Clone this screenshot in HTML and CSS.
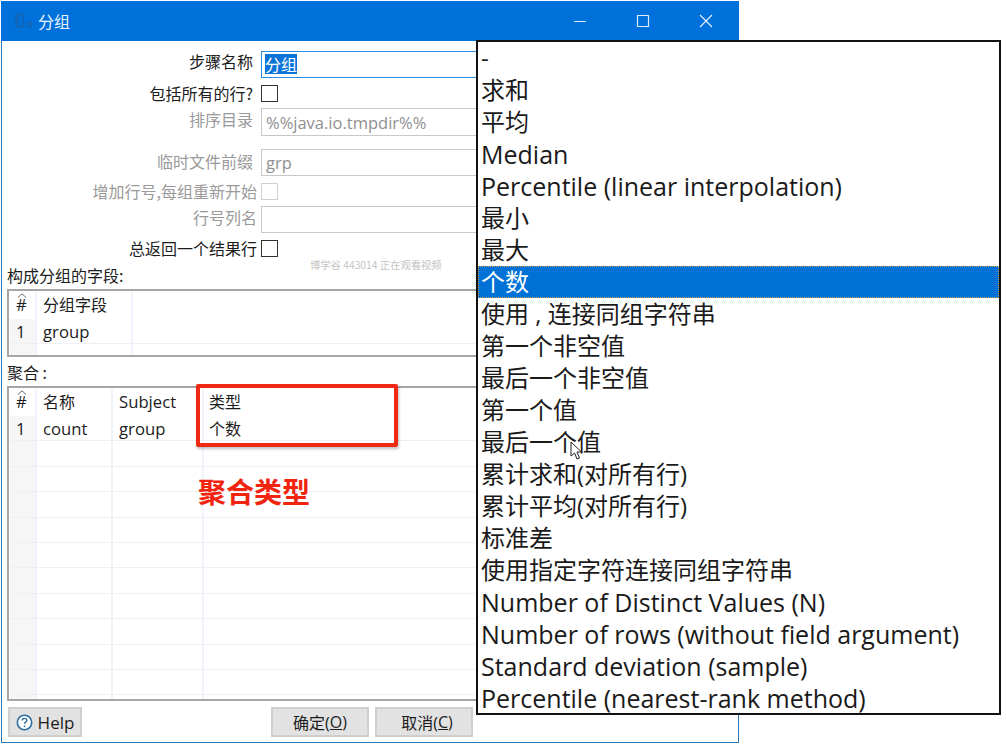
FILE: index.html
```html
<!DOCTYPE html>
<html lang="zh">
<head>
<meta charset="utf-8">
<title>分组</title>
<link rel="stylesheet" href="styles.css">
</head>
<body>
<div class="window">
  <header class="titlebar">
    <svg class="app-icon" width="18" height="16" viewBox="0 0 18 16"><path d="M1 1h7v13H1zM3 1v13M12 9h4v5h-4z" fill="none" stroke="#1a5f9e" stroke-width="1"/></svg>
    <span class="title">分组</span>
    <div class="controls">
      <svg class="ctl" width="14" height="14" viewBox="0 0 14 14"><path d="M1 7.5h12" stroke="#dcebfa" stroke-width="1" fill="none"/></svg>
      <svg class="ctl" width="14" height="14" viewBox="0 0 14 14"><path d="M1.5 1.5h11v11h-11z" stroke="#dcebfa" stroke-width="1.2" fill="none"/></svg>
      <svg class="ctl" width="14" height="14" viewBox="0 0 14 14"><path d="M1 1l12 12M13 1L1 13" stroke="#eaf3fc" stroke-width="1.1" fill="none"/></svg>
    </div>
  </header>
  <main class="body">
    <form class="form">
      <label class="lbl up4">步骤名称</label><div class="field focus"><span class="sel">分组</span></div>
      <label class="lbl">包括所有的行?</label><div class="check-row"><span class="check"></span></div>
      <label class="lbl up3 off">排序目录</label><div class="field tall off">%%java.io.tmpdir%%</div>
      <div class="spacer"></div>
      <label class="lbl up2 off">临时文件前缀</label><div class="field off">grp</div>
      <label class="lbl wide off">增加行号,每组重新开始</label><div class="check-row"><span class="check off"></span></div>
      <label class="lbl wide up3 off">行号列名</label><div class="field off"></div>
      <label class="lbl wide">总返回一个结果行</label><div class="check-row"><span class="check"></span></div>
    </form>
    <div class="section s1">构成分组的字段:</div>
    <div class="grid g1">
      <div class="row head"><div class="c num"><svg class="caret" width="10" height="5" viewBox="0 0 10 5"><path d="M1 4.5L5 .8l4 3.7" fill="none" stroke="#666"/></svg>#</div><div class="c w95 cjk">分组字段</div><div class="c"></div></div>
      <div class="row line"><div class="c num">1</div><div class="c w95">group</div><div class="c"></div></div>
      <div class="row short"><div class="c num"></div><div class="c w95"></div><div class="c"></div></div>
    </div>
    <div class="section s2">聚合 :</div>
    <div class="grid g2">
      <div class="row head"><div class="c num"><svg class="caret" width="10" height="5" viewBox="0 0 10 5"><path d="M1 4.5L5 .8l4 3.7" fill="none" stroke="#666"/></svg>#</div><div class="c w76 cjk">名称</div><div class="c w91">Subject</div><div class="c cjk type">类型</div></div>
      <div class="row line"><div class="c num">1</div><div class="c w76">count</div><div class="c w91">group</div><div class="c cjk type">个数</div></div>
      <div class="row line e"><div class="c num"></div><div class="c w76"></div><div class="c w91"></div><div class="c"></div></div>
      <div class="row line e"><div class="c num"></div><div class="c w76"></div><div class="c w91"></div><div class="c"></div></div>
      <div class="row line e"><div class="c num"></div><div class="c w76"></div><div class="c w91"></div><div class="c"></div></div>
      <div class="row line e"><div class="c num"></div><div class="c w76"></div><div class="c w91"></div><div class="c"></div></div>
      <div class="row line e"><div class="c num"></div><div class="c w76"></div><div class="c w91"></div><div class="c"></div></div>
      <div class="row line e"><div class="c num"></div><div class="c w76"></div><div class="c w91"></div><div class="c"></div></div>
      <div class="row line e"><div class="c num"></div><div class="c w76"></div><div class="c w91"></div><div class="c"></div></div>
      <div class="row line e"><div class="c num"></div><div class="c w76"></div><div class="c w91"></div><div class="c"></div></div>
      <div class="row line e"><div class="c num"></div><div class="c w76"></div><div class="c w91"></div><div class="c"></div></div>
      <div class="row line e"><div class="c num"></div><div class="c w76"></div><div class="c w91"></div><div class="c"></div></div>
      <div class="row tail"><div class="c num"></div><div class="c w76"></div><div class="c w91"></div><div class="c"></div></div>
    </div>
    <footer class="buttons">
      <button class="btn help" type="button"><svg width="17" height="17" viewBox="0 0 17 17"><circle cx="8.5" cy="8.5" r="7.2" fill="#fff" stroke="#2f6f9f" stroke-width="1.6"/><path d="M6.2 6.6c0-1.4 1-2.2 2.3-2.2s2.3.8 2.3 2c0 1.700-2.300 1.700-2.300 3.400" fill="none" stroke="#2f6f9f" stroke-width="1.400"/><circle cx="8.500" cy="12.300" r=".9" fill="#2f6f9f"/></svg>Help</button>
      <span class="grow"></span>
      <button class="btn act" type="button">确定(<u>O</u>)</button>
      <button class="btn act cancel" type="button">取消(<u>C</u>)</button>
    </footer>
  </main>
  <div class="watermark">博学谷 443014 正在观看视频</div>
  <div class="redbox"></div>
  <div class="redlabel">聚合类型</div>
</div>
<ul class="dropdown">
  <li>-</li>
  <li>求和</li>
  <li>平均</li>
  <li class="en">Median</li>
  <li class="en">Percentile (linear interpolation)</li>
  <li>最小</li>
  <li>最大</li>
  <li class="selected">个数</li>
  <li>使用 , 连接同组字符串</li>
  <li>第一个非空值</li>
  <li>最后一个非空值</li>
  <li>第一个值</li>
  <li>最后一个值</li>
  <li>累计求和(对所有行)</li>
  <li>累计平均(对所有行)</li>
  <li>标准差</li>
  <li>使用指定字符连接同组字符串</li>
  <li class="en">Number of Distinct Values (N)</li>
  <li class="en">Number of rows (without field argument)</li>
  <li class="en">Standard deviation (sample)</li>
  <li class="en">Percentile (nearest-rank method)</li>
</ul>
<svg class="cursor" width="13" height="19" viewBox="0 0 13 19"><path d="M1 1v14l3.500-3 2.500 6 2.500-1-2.500-6h4.500z" fill="#fff" stroke="#222" stroke-width="1"/></svg>
</body>
</html>
```
FILE: styles.css
```css
html, body {
  margin: 0;
  padding: 0;
  background: #fff;
  overflow: hidden;
}
body {
  width: 1006px;
  height: 744px;
  position: relative;
  font-family: "Open Sans", "Noto Sans CJK SC", sans-serif;
  color: #1c1c1c;
}
.window {
  position: absolute;
  left: 1px;
  top: 1px;
  width: 738px;
  height: 742px;
  box-sizing: border-box;
  border: 1px solid #2a78b8;
  border-top: 0;
  display: flex;
  flex-direction: column;
  background: #fff;
}
.titlebar {
  height: 40px;
  flex: none;
  margin: 0 -1px;
  background: #0071db;
  display: flex;
  align-items: center;
  color: #e8f2fc;
  font-size: 16px;
  font-family: "Noto Sans CJK SC", sans-serif;
  padding-left: 14px;
}
.app-icon { margin-right: 5px; }
.controls {
  margin-left: auto;
  display: flex;
  gap: 49px;
  padding-right: 26px;
}
.body {
  flex: 1;
  display: flex;
  flex-direction: column;
  padding: 0 0 5px 5px;
  min-height: 0;
}
.form {
  display: grid;
  grid-template-columns: 254px 1fr;
  margin-top: 10px;
  font-size: 16px;
  font-family: "Noto Sans CJK SC", sans-serif;
}
.lbl {
  padding-right: 8px;
  display: flex;
  align-items: center;
  justify-content: flex-end;
  white-space: nowrap;
  line-height: 18px;
  color: #1c1c1c;
}
.lbl.up2 { padding-bottom: 4px; }
.lbl.up3 { padding-bottom: 6px; }
.lbl.up4 { padding-bottom: 8px; }
.lbl.wide { padding-right: 4px; }
.lbl.off { color: #9a9a9a; }
.field {
  height: 27px;
  box-sizing: border-box;
  border: 1px solid #c8c8c8;
  padding: 0 4px;
  line-height: 26px;
  font-family: "Open Sans", "Noto Sans CJK SC", sans-serif;
  font-size: 16.5px;
  width: 300px;
}
.field.tall { height: 28px; line-height: 27px; }
.field.focus {
  border: 1px solid #2d8ce4;
  color: #fff;
  padding-left: 3px;
}
.field.off { color: #8f8f8f; }
.sel {
  background: #0a74d8;
  display: inline-block;
  line-height: 20px;
  font-size: 16px;
  font-family: "Noto Sans CJK SC", sans-serif;
}
.spacer { grid-column: 1 / -1; height: 13px; }
.check-row {
  height: 30px;
  display: flex;
  align-items: center;
}
.check {
  width: 17px;
  height: 17px;
  box-sizing: border-box;
  border: 1px solid #333;
  background: #fff;
}
.check.off { border-color: #d0d0d0; }
.section {
  font-size: 16px;
  line-height: 20px;
  font-family: "Noto Sans CJK SC", sans-serif;
}
.s1 { margin-top: 2px; }
.s2 { margin-top: 5px; }
.grid {
  box-sizing: border-box;
  width: 470px;
  border: 2px solid #a6a6a6;
  border-right: 0;
  padding: 1px 0 0 1px;
  margin-top: 4px;
  font-size: 16.7px;
  overflow: hidden;
}
.g1 { height: 68px; }
.g2 { height: 315px; }
.row {
  display: flex;
  height: 26px;
}
.row.head { height: 27px; }
.row.line { height: 25.400px; box-sizing: border-box; border-bottom: 1px solid #eef0f3; }
.row.short { height: 14px; }
.row.tail { height: 20px; }
.c {
  box-sizing: border-box;
  line-height: 25px;
  padding-left: 6px;
  white-space: nowrap;
  flex: none;
  border-right: 2px solid #f0f3f9;
}
.c:last-child { flex: 1; border-right: 0; }
.cjk { font-family: "Noto Sans CJK SC", sans-serif; font-size: 16px; }
.type { padding-left: 5px; }
.num {
  width: 27px;
  background: #f5f6f5;
  position: relative;
  padding-left: 6px;
}
.head .num { background: #fff; }
.caret { position: absolute; left: 7px; top: 1px; }
.w95 { width: 96px; }
.w76 { width: 76px; }
.w91 { width: 91px; }
.buttons {
  display: flex;
  margin-top: 6px;
  gap: 6px;
  height: 30px;
  padding-right: 265px;
  flex: none;
  padding-left: 1px;
}
.grow { flex: 1; }
.btn {
  box-sizing: border-box;
  height: 30px;
  background: #e2e2e2;
  border: 2px solid #cfcfcf;
  font-size: 17px;
  color: #1c1c1c;
  font-family: "Open Sans", "Noto Sans CJK SC", sans-serif;
  padding: 0;
  display: flex;
  align-items: center;
  justify-content: center;
}
.help { width: 74px; gap: 5px; }
.act { width: 98px; font-size: 16px; }
.cancel { padding-left: 6px; }
.watermark {
  position: absolute;
  left: 308px;
  top: 256px;
  font-size: 10.3px;
  color: #c4c4c4;
  font-family: "Noto Sans CJK SC", sans-serif;
  white-space: nowrap;
}
.redbox {
  position: absolute;
  left: 194px;
  top: 383px;
  width: 202px;
  height: 63px;
  box-sizing: border-box;
  border: 4px solid #ee2a14;
  border-radius: 2px;
  box-shadow: 1px 2px 3px rgba(0,0,0,.25);
}
.redlabel {
  position: absolute;
  left: 196px;
  top: 470px;
  font-size: 28px;
  line-height: 40px;
  font-weight: 700;
  color: #f0240f;
  font-family: "Noto Sans CJK SC", sans-serif;
}
.dropdown {
  position: absolute;
  left: 476px;
  top: 40px;
  width: 525px;
  height: 675px;
  box-sizing: border-box;
  border: 2px solid #111;
  background: #fff;
  margin: 0;
  padding: 0;
  list-style: none;
  font-size: 24px;
  font-family: "Open Sans", "Noto Sans CJK SC", sans-serif;
  color: #1a1a1a;
}
.dropdown li {
  height: 32px;
  line-height: 32px;
  padding-left: 3px;
  white-space: nowrap;
}
.dropdown .en { font-size: 25px; }
.dropdown .selected {
  background: #0071d6;
  color: #fff;
  outline: 1px dotted #c9a050;
  outline-offset: -1px;
}
.cursor {
  position: absolute;
  left: 570px;
  top: 441px;
}
```
